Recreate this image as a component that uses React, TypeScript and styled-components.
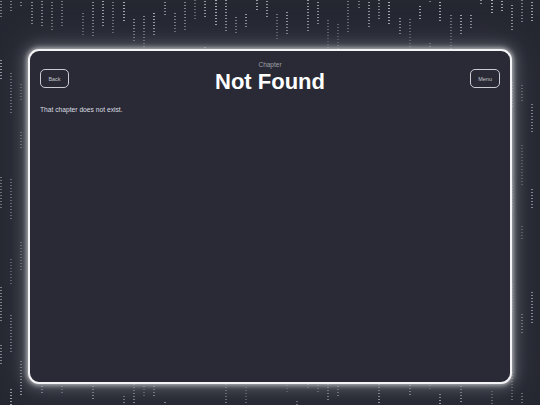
import React from 'react';
import styled, { createGlobalStyle } from 'styled-components';

const GlobalStyle = createGlobalStyle`
  html, body {
    margin: 0;
    padding: 0;
    background: #252731;
    font-family: 'Liberation Sans', Arial, sans-serif;
  }
  #root {
    min-height: 100vh;
  }
`;

// digital rain behind the reader card
type Drop = { top: number; height: number; alpha: number };

const PITCH = 10.22;
const COLUMN_COUNT = 53;

function makeRain(): Drop[][] {
  let seed = 1337;
  const rand = () => {
    seed = (seed * 16807) % 2147483647;
    return (seed - 1) / 2147483646;
  };
  const cols: Drop[][] = [];
  for (let i = 0; i < COLUMN_COUNT; i++) {
    const drops: Drop[] = [];
    let y = -20 + rand() * 40;
    while (y < 405) {
      const height = 12 + rand() * 30;
      drops.push({ top: Math.round(y), height: Math.round(height), alpha: 0.35 + rand() * 0.4 });
      y += height + 24 + rand() * 80;
    }
    cols.push(drops);
  }
  return cols;
}

const rain = makeRain();

const Stage = styled.div`
  position: relative;
  min-height: 100vh;
  box-sizing: border-box;
  padding: 49px 28px 21px;
  display: flex;
  overflow: hidden;
`;

const RainLayer = styled.div`
  position: absolute;
  inset: 0;
  pointer-events: none;
`;

const RainColumn = styled.div`
  position: absolute;
  top: 0;
  bottom: 0;
  width: 2px;
`;

const RainDrop = styled.div`
  position: absolute;
  left: 0;
  width: 100%;
  background: repeating-linear-gradient(
    to bottom,
    #d9dbe4 0 1px,
    transparent 1px 3px
  );
`;

const Card = styled.main`
  position: relative;
  z-index: 1;
  flex: 1;
  box-sizing: border-box;
  background: #292a35;
  border: 2px solid #f4f4f6;
  border-radius: 11px;
  padding: 10px 10px;
  box-shadow:
    0 0 5px 1px rgba(255, 255, 255, 0.65),
    0 0 14px 4px rgba(190, 192, 202, 0.3),
    0 0 30px 10px rgba(55, 57, 67, 0.85);
  color: #e8e8ec;
`;

const Header = styled.header`
  display: grid;
  grid-template-columns: 1fr auto 1fr;
  align-items: center;
`;

const NavButton = styled.button<{ $side: 'left' | 'right' }>`
  justify-self: ${(p) => (p.$side === 'left' ? 'start' : 'end')};
  margin-top: 2px;
  height: 19px;
  padding: 0 7px;
  min-width: 29px;
  background: transparent;
  border: 1px solid #c9cad2;
  border-radius: 5px;
  color: #c4c5cc;
  font-family: 'Liberation Sans', Arial, sans-serif;
  font-size: 5.5px;
  cursor: pointer;
`;

const TitleBlock = styled.div`
  display: flex;
  flex-direction: column;
  align-items: center;
`;

const Eyebrow = styled.div`
  font-size: 6.5px;
  line-height: 8px;
  color: #9fa0a8;
`;

const Title = styled.h1`
  margin: 0;
  font-size: 22px;
  line-height: 25px;
  font-weight: 700;
  color: #ffffff;
`;

const Message = styled.p`
  margin: 12px 0 0;
  font-size: 6.7px;
  line-height: 8px;
  color: #dcdde2;
`;

export default function App() {
  return (
    <>
      <GlobalStyle />
      <Stage>
        <RainLayer>
          {rain.map((drops, i) => (
            <RainColumn key={i} style={{ left: Math.round(i * PITCH) }}>
              {drops.map((d, j) => (
                <RainDrop key={j} style={{ top: d.top, height: d.height, opacity: d.alpha }} />
              ))}
            </RainColumn>
          ))}
        </RainLayer>
        <Card>
          <Header>
            <NavButton $side="left">Back</NavButton>
            <TitleBlock>
              <Eyebrow>Chapter</Eyebrow>
              <Title>Not Found</Title>
            </TitleBlock>
            <NavButton $side="right">Menu</NavButton>
          </Header>
          <Message>That chapter does not exist.</Message>
        </Card>
      </Stage>
    </>
  );
}
